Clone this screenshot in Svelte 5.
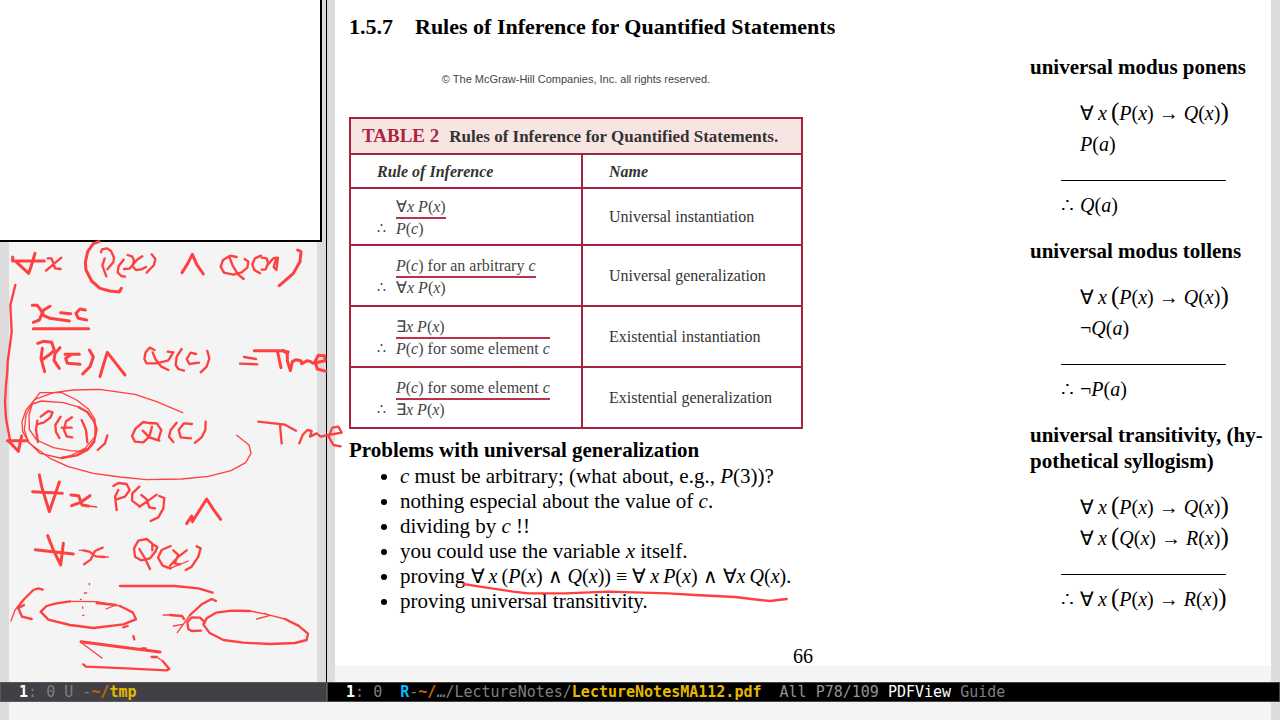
<script>
  const rules = [
    { top: '∀*x P*(*x*)', bottom: '*P*(*c*)', name: 'Universal instantiation' },
    { top: '*P*(*c*) for an arbitrary *c*', bottom: '∀*x P*(*x*)', name: 'Universal generalization' },
    { top: '∃*x P*(*x*)', bottom: '*P*(*c*) for some element *c*', name: 'Existential instantiation' },
    { top: '*P*(*c*) for some element *c*', bottom: '∃*x P*(*x*)', name: 'Existential generalization' }
  ];

  const problems = [
    { text: '*c* must be arbitrary; (what about, e.g., *P*(3))?' },
    { text: 'nothing especial about the value of *c*.' },
    { text: 'dividing by *c* !!' },
    { text: 'you could use the variable *x* itself.' },
    { text: 'proving ', math: '∀\u2009*x*\u2009(*P*(*x*) ∧ *Q*(*x*)) ≡ ∀\u2009*x*\u2009*P*(*x*) ∧ ∀*x*\u2009*Q*(*x*).' },
    { text: 'proving universal transitivity.' }
  ];

  const syllogisms = [
    { title: ['universal modus ponens'], premises: ['∀\u2009*x*\u2009[*P*(*x*) → *Q*(*x*)]', '*P*(*a*)'], conclusion: '*Q*(*a*)' },
    { title: ['universal modus tollens'], premises: ['∀\u2009*x*\u2009[*P*(*x*) → *Q*(*x*)]', '¬*Q*(*a*)'], conclusion: '¬*P*(*a*)' },
    {
      title: ['universal transitivity, (hy-', 'pothetical syllogism)'],
      premises: ['∀\u2009*x*\u2009[*P*(*x*) → *Q*(*x*)]', '∀\u2009*x*\u2009[*Q*(*x*) → *R*(*x*)]'],
      conclusion: '∀\u2009*x*\u2009[*P*(*x*) → *R*(*x*)]'
    }
  ];

  // *...* is italic, [ and ] are tall parentheses
  function parse(source) {
    const out = [];
    source.split('*').forEach((part, i) => {
      if (i % 2) out.push({ kind: 'var', text: part });
      else
        part.split(/([[\]])/).forEach((t) => {
          if (t === '[') out.push({ kind: 'tall', text: '(' });
          else if (t === ']') out.push({ kind: 'tall', text: ')' });
          else if (t) out.push({ kind: 'text', text: t });
        });
    });
    return out;
  }

  // Pen strokes, grouped by sheet region; units are thirds of a pixel
  const upper = [
    'M38 66V78H133M50 82L86 115L94 92L105 55',
    'M297 20L280 26L263 50L256 82L258 105L275 138L300 160L330 168L358 171L364 160',
    'M546 113L563 86L577 58L590 88L610 117',
    'M893 45L903 50L900 80L880 115L838 152',
    'M97 211L112 211L120 222L132 242L150 250L208 258M150 214L130 226L118 255L100 262M182 233L212 236M256 225L240 222L228 235L235 250L260 255',
    'M100 281H266',
    'M127 340L123 370L134 410M113 325L130 319L155 322L163 345L150 358L130 372',
    'M180 338L165 355L162 376L178 400M238 358H195M212 360L197 370L202 385L240 388M268 345L280 365L270 395L248 417',
    'M300 425L310 390L322 352L350 388L375 420',
    'M763 347L845 347L865 351M833 352L843 398',
    'M850 346L862 357L862 378L871 407L877 380L888 374L903 377L905 386L922 377L932 380L940 385L975 377L974 362L955 361L945 380L952 402L978 409'
  ];
  const upperMid = [
    'M143 70L154 70L160 83L165 100L182 102M184 68L160 88L138 107',
    'M314 70L307 92L319 124M303 52L306 43L320 40L333 48L342 68L340 82L322 103',
    'M371 74L356 93L353 112L364 123L375 125',
    'M383 60L396 64L402 76L398 94L408 105L424 103L438 96M372 102L388 101L411 74L427 64',
    'M455 58L466 72L462 90L440 113',
    'M710 66L690 62L669 75L662 95L672 113L700 119L725 112L742 98L745 80L734 72M688 66L698 92L714 118L731 132',
    'M783 62L765 70L757 88L763 105L780 115',
    'M785 68L800 70L804 85L797 103L785 104M801 92L820 70L829 68L821 96L829 105L834 68',
    'M464 345L449 338L437 352L433 372L440 385L470 385L505 376L520 352L503 350M458 352L466 372L483 394L505 405',
    'M545 342L530 365L527 390L535 402L552 407M588 357L572 353L560 372L568 387L597 383M622 348L628 370L620 395L602 412',
    'M732 366L768 372M720 386L772 388',
    'M46 150L40 175L31 210L33 250L35 290L30 330L23 380L22 410L18 450L15 500L18 550L30 615'
  ];
  const middle = [
    'M22 182H82M25 182L55 214L65 168',
    'M118 285L125 320L148 395L178 306M98 335L187 340',
    'M213 345L236 347L246 375L265 378M270 347L240 368L215 377',
    'M560 431L575 408L577 425L620 357L640 388L662 418'
  ];
  const middleMid = [
    'M112 122L108 150L114 186M122 110L145 93L158 97L151 113L132 127L115 132',
    'M182 110L166 135L168 156L178 174M216 112L198 124L192 150L200 169L217 172M185 143H215M245 120L258 150L262 187',
    'M322 166L315 190L293 210',
    'M452 130L430 126L407 145L396 168L405 185L430 187L448 170L456 140M450 129L470 130L484 150L476 176M428 152L448 172L478 182',
    'M530 128L512 150L507 170L520 186M576 132L552 130L536 150L542 172L573 175M617 125L616 150L605 172L585 188',
    'M775 125L855 134L888 152M840 135L845 190',
    'M898 190L908 165L922 150L935 153L930 170L950 160L962 170L985 165L1025 158L1015 140L997 143L986 170L1000 195L1022 199',
    'M355 330L345 350L350 390M340 318L355 309L380 312L389 330L375 350L350 358',
    'M418 320L397 340L396 362L420 380M424 345L440 358L448 382L465 385M470 344L445 362L418 380M478 348L493 354L490 385L475 412L452 423',
    'M236 82L262 96L282 124L290 148L283 182L265 206L240 216M283 185L262 210L230 226L185 234'
  ];
  const middleThin = [
    'M548 98L470 65L405 43L298 28L220 30L160 38L105 58L78 90L66 125L68 155L88 190L150 235L205 260L280 280L360 291L440 299L545 297L625 289L693 272L737 248L753 220L747 195L710 166',
    'M120 38L185 38L230 60L265 87L285 118L285 170L255 205L210 228L180 234L120 220L85 185L73 150L78 105L97 68Z',
    'M97 72L125 63L190 68L240 82M250 214L210 212L160 203L110 180L88 148L87 105L97 72M265 378L290 381'
  ];
  const lower = [
    'M143 32L160 75L182 120L190 55M106 74L220 87',
    'M243 350L340 363L480 381'
  ];
  const lowerMid = [
    'M250 76L268 80L288 94L313 96M308 68L285 78L272 104L252 118',
    'M457 76L457 56L440 42L415 47L402 70L405 95L423 106L450 100L466 80L472 66L462 60M418 72L435 100L450 132',
    'M512 63L485 75L474 98L488 122L512 131M520 76L535 90L524 115L540 118M560 76L532 98L510 122M590 64L602 70L595 95L575 125L557 135',
    'M360 183H525L595 190L638 203',
    'M72 240L55 250L66 275L95 282M52 248L70 225L100 195L115 190L128 194',
    'M122 260L140 243L165 236L210 229M290 234L348 240M360 243L398 262L408 283L370 298L280 309L210 300L145 284L122 260',
    'M425 370H437M455 396H470M488 408L508 432L500 436L380 430L258 425L250 418M400 333L403 343M370 307L383 303',
    'M510 270L546 273L552 282M615 292L600 278L575 277L562 292L565 312L575 318L603 317',
    'M570 270L605 238L635 222L648 228',
    'M750 258L695 257L648 263L620 280L610 298L628 323L670 345L730 353L810 357L885 354L920 345L924 326L895 302L855 282'
  ];
  const lowerThin = [
    'M33 288L45 255L55 244',
    'M210 229L290 230L360 243M348 240L318 252M246 355L306 399M470 396L488 408',
    'M490 270H515M520 303L548 298M532 323L570 270',
    'M750 258L800 268L855 282M770 282L808 272L795 265M510 130L565 108M313 96H325M238 76H250',
    'M268 175v4M253 204h7M241 223h3M248 246v4M248 271h4'
  ];
  const underline =
    'M385 462L435 470L490 478L535 485L580 490L690 490L820 485L1000 490L1080 495L1200 501L1275 510L1305 513L1355 507';
</script>

{#snippet rich(source)}{#each parse(source) as t}{#if t.kind === 'var'}<i>{t.text}</i>{:else if t.kind === 'tall'}<span class="tall">{t.text}</span>{:else}{t.text}{/if}{/each}{/snippet}

<div class="frame">
  <div class="windows">
    <section class="window scratch" aria-label="Notes">
      <div class="blank"></div>
    </section>

    <main class="window viewer">
      <article class="page">
        <div class="body">
          <div class="text">
            <h1><span>1.5.7</span><span>Rules of Inference for Quantified Statements</span></h1>
            <p class="copyright">© The McGraw-Hill Companies, Inc. all rights reserved.</p>
            <table>
              <colgroup><col class="rule-col" /><col /></colgroup>
              <thead>
                <tr class="caption"><th colspan="2"><b>TABLE 2</b>Rules of Inference for Quantified Statements.</th></tr>
                <tr class="heads"><th>Rule of Inference</th><th>Name</th></tr>
              </thead>
              <tbody>
                {#each rules as rule}
                  <tr>
                    <td>
                      <div class="rule">
                        <span class="premise">{@render rich(rule.top)}</span>
                        <span class="therefore">∴</span>
                        <span class="result">{@render rich(rule.bottom)}</span>
                      </div>
                    </td>
                    <td>{rule.name}</td>
                  </tr>
                {/each}
              </tbody>
            </table>
            <h2>Problems with universal generalization</h2>
            <ul>
              {#each problems as item}
                <li>{@render rich(item.text)}{#if item.math}<span class="math">{@render rich(item.math)}</span>{/if}</li>
              {/each}
            </ul>
          </div>

          <aside>
            {#each syllogisms as s}
              <section>
                <h2>{#each s.title as line}<span>{line}</span>{/each}</h2>
                <div class="argument">
                  {#each s.premises as p}
                    <p>{@render rich(p)}</p>
                  {/each}
                  <hr />
                  <p class="conclusion"><span class="so">∴</span><span>{@render rich(s.conclusion)}</span></p>
                </div>
              </section>
            {/each}
          </aside>
        </div>
        <footer>66</footer>
      </article>
    </main>
  </div>

  <div class="modelines">
    <div class="modeline inactive"><b class="num">{'  1'}</b>: 0 U -<b class="home">~/</b><b class="file">tmp</b></div>
    <div class="modeline active"><b class="num">{'  1'}</b>{': 0  '}<b class="ro">R</b>-<b class="home">~/</b>…/LectureNotes/<b class="file">LectureNotesMA112.pdf</b><span class="position">{'  All P78/109 '}</span><span class="mode">PDFView</span> Guide</div>
  </div>
  <div class="minibuffer"></div>

  <svg class="ink" width="1280" height="720" viewBox="0 0 3840 2160" aria-hidden="true">
    <g transform="translate(0 705)">
      {#each upper as d}<path {d} />{/each}
      {#each upperMid as d}<path class="mid" {d} />{/each}
    </g>
    <g transform="translate(0 1140)">
      {#each middle as d}<path {d} />{/each}
      {#each middleMid as d}<path class="mid" {d} />{/each}
      {#each middleThin as d}<path class="thin" {d} />{/each}
    </g>
    <g transform="translate(0 1575)">
      {#each lower as d}<path {d} />{/each}
      {#each lowerMid as d}<path class="mid" {d} />{/each}
      {#each lowerThin as d}<path class="thin" {d} />{/each}
    </g>
    <path class="mid" transform="translate(1005 1290)" d={underline} />
  </svg>
</div>

<style>
  :global(body) {
    margin: 0;
    background: #f4f4f4;
  }
  .frame {
    position: relative;
    display: flex;
    flex-direction: column;
    min-height: 100vh;
    overflow: hidden;
    color: #000;
    font-family: 'Liberation Serif', serif;
    font-size: 21px;
    line-height: 25px;
  }
  .windows,
  .modelines {
    display: grid;
    grid-template-columns: minmax(0, 327fr) minmax(0, 953fr);
  }
  .windows {
    flex: 1;
  }
  .window {
    border: solid #dcdcdc;
    border-width: 0 9px;
  }
  .scratch {
    position: relative;
    border-right-width: 10px;
  }
  .scratch::after {
    content: '';
    position: absolute;
    top: 0;
    right: -10px;
    width: 1px;
    height: 100%;
    background: #000;
  }
  .blank {
    box-sizing: border-box;
    height: 242px;
    margin: 0 -5px 0 -9px;
    background: #fff;
    border: solid #000;
    border-width: 0 2px 2px 0;
  }
  .viewer {
    border-left-width: 8px;
  }
  .page {
    background: #fff;
    padding: 14px 14px 0;
  }
  .body {
    display: grid;
    grid-template-columns: minmax(0, 1fr) 227px;
  }
  h1,
  h2,
  p,
  ul {
    margin: 0;
  }
  h1 {
    display: flex;
    gap: 22px;
    font-size: 22px;
    line-height: 25px;
  }
  .copyright {
    width: 454px;
    margin: 28px 0 25px;
    color: #444;
    font-family: 'Liberation Sans', sans-serif;
    font-size: 11px;
    text-align: center;
  }
  table {
    width: 454px;
    border-collapse: collapse;
    table-layout: fixed;
    color: #333;
    font-size: 16px;
    line-height: 21px;
  }
  .rule-col {
    width: 232px;
  }
  th,
  td {
    border: 2px solid #a8233f;
    padding: 0 26px;
    text-align: left;
    vertical-align: middle;
  }
  .caption th {
    height: 34px;
    padding: 0 11px;
    background: #f7e5e3;
    font-size: 17px;
    white-space: nowrap;
  }
  .caption b {
    margin-right: 10px;
    color: #b0233f;
    font-size: 19px;
  }
  .heads th {
    height: 32px;
    font-style: italic;
  }
  td {
    height: 59px;
  }
  tbody tr:first-child td {
    height: 55px;
  }
  .rule {
    display: grid;
    grid-template-columns: 19px max-content;
    padding-top: 2px;
    color: #444;
    line-height: 20px;
  }
  .premise {
    grid-column: 2;
    border-bottom: 2px solid #b8324c;
  }
  .therefore {
    font-size: 14px;
  }
  .text > h2 {
    margin-top: 8px;
  }
  h2 {
    font-size: 21px;
    line-height: 26px;
  }
  h2 span {
    display: block;
    white-space: nowrap;
  }
  ul {
    margin-top: 1px;
    padding-left: 51px;
    list-style: disc;
  }
  .math {
    font-size: 20px;
    line-height: 20px;
  }
  aside {
    display: flex;
    flex-direction: column;
    gap: 17px;
    padding-top: 40px;
  }
  .argument {
    width: 165px;
    margin: 18px 0 0 31px;
    font-size: 20px;
  }
  .argument p {
    padding-left: 19px;
    line-height: 31px;
    white-space: nowrap;
  }
  .argument hr {
    margin: 20px 0 9px;
    border: 0;
    border-top: 1px solid #000;
  }
  .argument .conclusion {
    display: flex;
    padding-left: 0;
  }
  .so {
    flex: none;
    width: 19px;
  }
  .tall {
    font-size: 25px;
    line-height: 20px;
  }
  footer {
    padding: 31px 0 0;
    font-size: 20px;
    line-height: 20px;
    text-align: center;
  }
  .modeline {
    box-sizing: border-box;
    height: 20px;
    overflow: hidden;
    border: 1px solid #5a5a5a;
    color: #7f7f7f;
    font-family: 'DejaVu Sans Mono', monospace;
    font-size: 15px;
    line-height: 18px;
    white-space: pre;
  }
  .inactive {
    background: #424046;
  }
  .active {
    background: #000;
    border-color: #454545;
  }
  .num,
  .mode {
    color: #fff;
  }
  .home {
    color: #cc6600;
  }
  .file {
    color: #e6b800;
  }
  .ro {
    color: #00bfff;
  }
  .position {
    color: #8e9494;
  }
  .minibuffer {
    height: 18px;
    border: solid #dcdcdc;
    border-width: 0 9px;
  }
  .ink {
    position: absolute;
    top: 0;
    left: 0;
    fill: none;
    stroke: #ff4040;
    stroke-width: 9;
    stroke-linecap: round;
    stroke-linejoin: round;
    pointer-events: none;
  }
  .mid {
    stroke-width: 7;
  }
  .thin {
    stroke-width: 4;
  }
</style>
